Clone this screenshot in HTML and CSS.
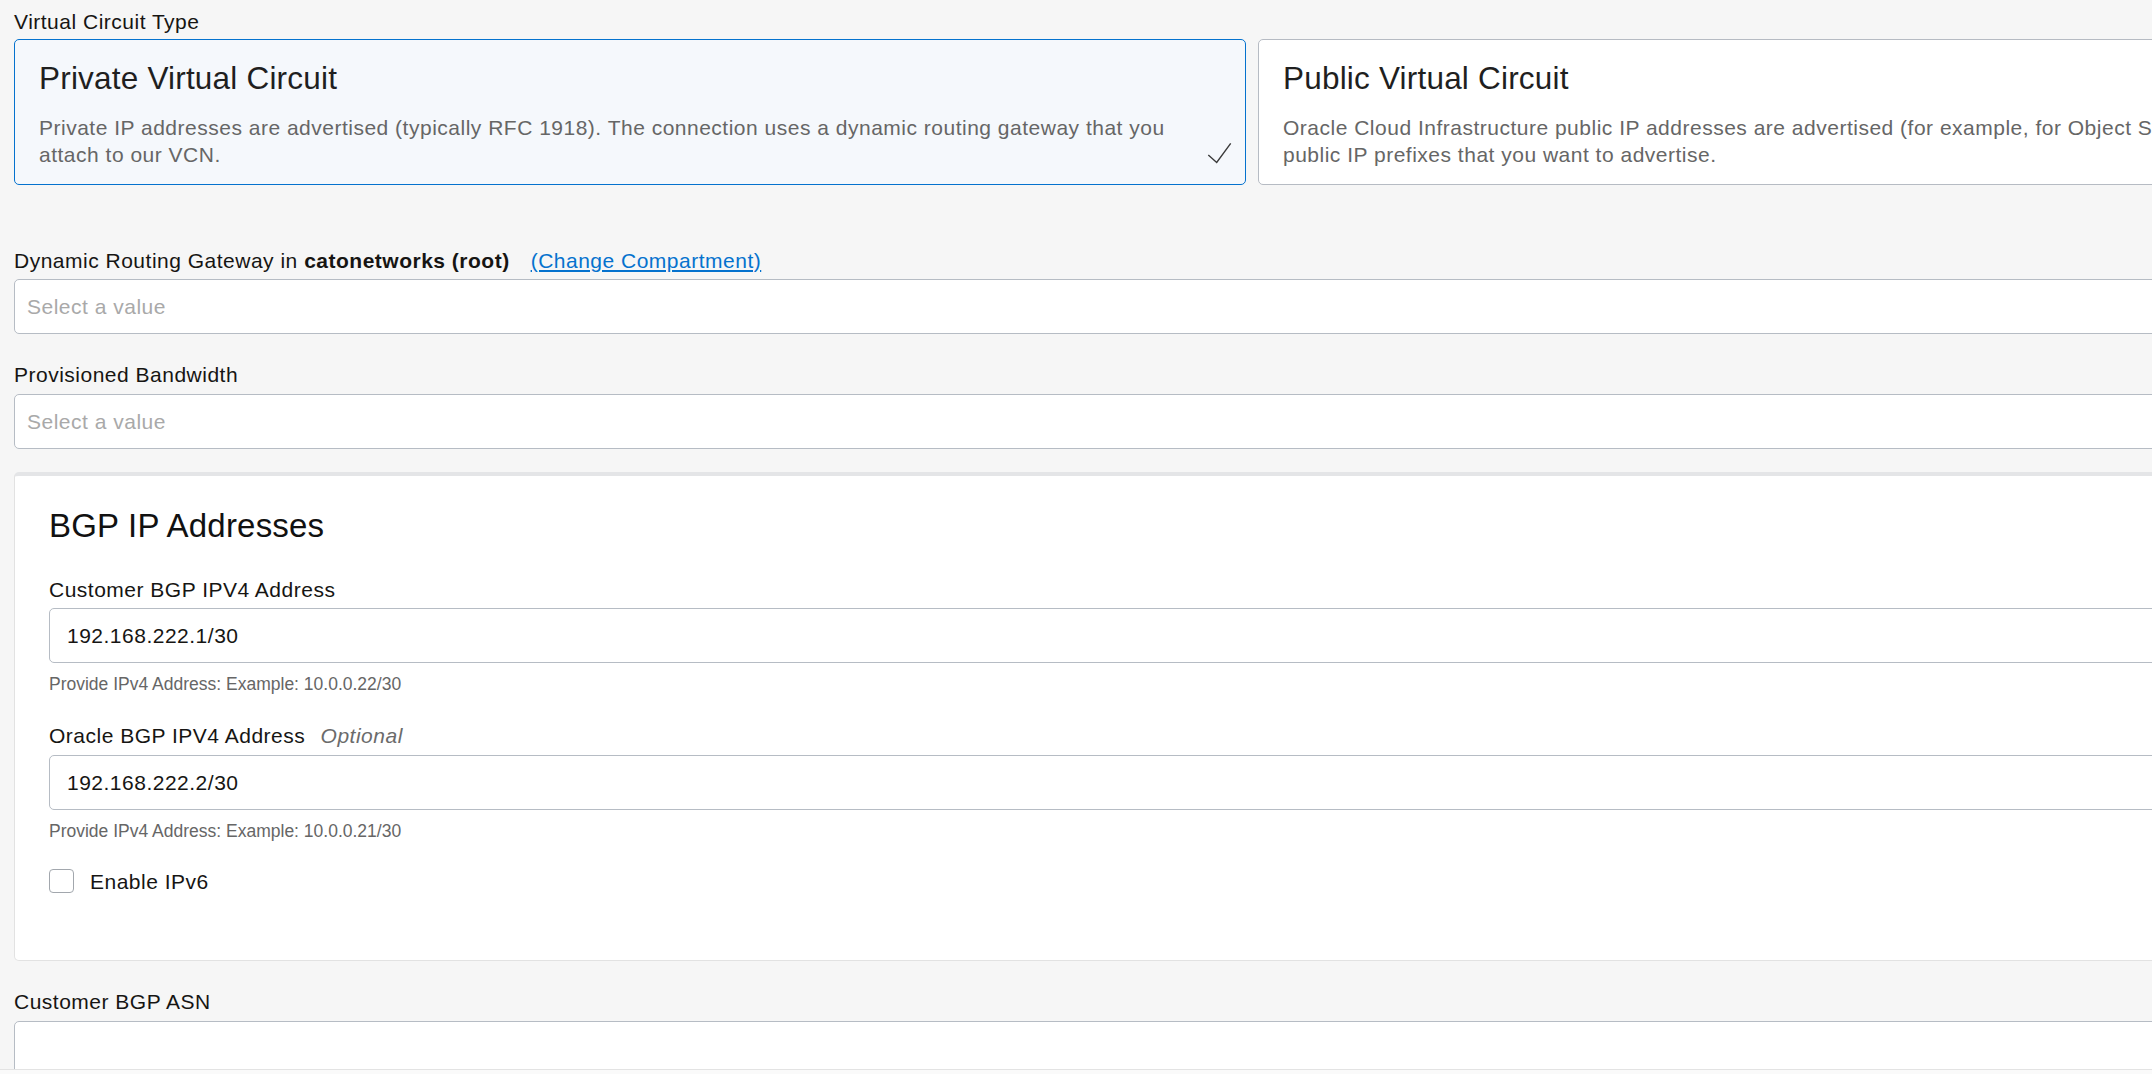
FILE: index.html
```html
<!DOCTYPE html>
<html lang="en">
<head>
    <meta charset="UTF-8">
    <title>Create Virtual Circuit</title>
    <link rel="stylesheet" href="styles.css">
</head>
<body>
<div class="page">
    <div class="field-label">Virtual Circuit Type</div>
    <div class="circuit-types">
        <div class="circuit-card selected">
            <div class="circuit-title">Private Virtual Circuit</div>
            <div class="circuit-desc">Private IP addresses are advertised (typically RFC 1918). The connection uses a dynamic routing gateway that you attach to our VCN.</div>
            <svg class="check" viewBox="0 0 25 22" width="25" height="22">
                <polyline points="1.3,13 9.7,20.5 23.7,1.3" fill="none" stroke="#3a3a3a" stroke-width="1.4"/>
            </svg>
        </div>
        <div class="circuit-card">
            <div class="circuit-title">Public Virtual Circuit</div>
            <div class="circuit-desc">Oracle Cloud Infrastructure public IP addresses are advertised (for example, for Object Storage). You specify the<br>public IP prefixes that you want to advertise.</div>
        </div>
    </div>

    <div class="field field-drg">
        <div class="field-label">Dynamic Routing Gateway in <b>catonetworks (root)</b><a href="#" class="change-link">(Change Compartment)</a></div>
        <div class="select-box placeholder">Select a value</div>
    </div>

    <div class="field">
        <div class="field-label">Provisioned Bandwidth</div>
        <div class="select-box placeholder">Select a value</div>
    </div>

    <div class="panel">
        <h2 class="panel-title">BGP IP Addresses</h2>

        <div class="field first">
            <div class="field-label">Customer BGP IPV4 Address</div>
            <div class="text-input">192.168.222.1/30</div>
            <div class="help">Provide IPv4 Address: Example: 10.0.0.22/30</div>
        </div>

        <div class="field">
            <div class="field-label">Oracle BGP IPV4 Address <span class="optional">Optional</span></div>
            <div class="text-input">192.168.222.2/30</div>
            <div class="help">Provide IPv4 Address: Example: 10.0.0.21/30</div>
        </div>

        <label class="checkbox-row">
            <span class="checkbox"></span>
            Enable IPv6
        </label>
    </div>

    <div class="field">
        <div class="field-label">Customer BGP ASN</div>
        <div class="text-input"></div>
    </div>
</div>
<div class="footer-bar"></div>
</body>
</html>
```

FILE: styles.css
```css
body {
    margin: 0;
    background-color: #f6f6f6;
    font-family: "Liberation Sans", Arial, Helvetica, sans-serif;
    color: #161513;
    overflow: hidden;
}

.page {
    width: 2476px;
    padding: 8px 14px 0;
}

.field-label {
    font-size: 21px;
    line-height: 27px;
    letter-spacing: 0.5px;
    margin-bottom: 5.5px;
}

.field-label b {
    font-weight: bold;
}

.change-link {
    margin-left: 21px;
    color: #0572ce;
    text-decoration: underline;
}

.optional {
    margin-left: 9px;
    font-style: italic;
    color: #6b6b6b;
}

/* circuit type cards */
.circuit-types {
    display: grid;
    grid-template-columns: 1232px 1232px;
    gap: 12px;
    margin-top: -1.5px;
}

.circuit-card {
    position: relative;
    background-color: #fff;
    border: 1px solid #b6bbc3;
    border-radius: 5px;
    padding: 20px 24px 16px 24px;
}

.circuit-card.selected {
    background-color: #f5f8fc;
    border-color: #0572ce;
}

.circuit-title {
    font-size: 31.5px;
    line-height: 36px;
    letter-spacing: 0.2px;
    color: #1f1f1f;
}

.circuit-desc {
    margin-top: 18px;
    font-size: 21px;
    line-height: 27px;
    letter-spacing: 0.5px;
    color: #666;
    padding-right: 20px;
}

.check {
    position: absolute;
    right: 13px;
    bottom: 20px;
}

/* fields */
.field {
    margin-top: 27px;
}

.field-drg {
    margin-top: 61.5px;
}

.select-box,
.text-input {
    box-sizing: border-box;
    height: 55px;
    background-color: #fff;
    border: 1px solid #b6bcc4;
    border-radius: 5px;
    font-size: 21px;
    line-height: 53px;
    letter-spacing: 0.5px;
}

.select-box {
    padding-left: 12px;
}

.select-box.placeholder {
    color: #a9a9a9;
}

.text-input {
    padding-left: 17px;
    color: #161513;
}

.help {
    margin-top: 9px;
    font-size: 17.5px;
    line-height: 24px;
    color: #666;
}

/* BGP panel */
.panel {
    margin-top: 23px;
    background-color: #fff;
    border: 1px solid #e2e2e2;
    border-top: 4px solid #e4e5e7;
    border-radius: 5px;
    padding: 32px 34px 65.5px;
}

.panel-title {
    margin: 0;
    font-size: 33px;
    line-height: 36px;
    letter-spacing: 0.2px;
    font-weight: normal;
    color: #111;
}

.panel .field {
    margin-top: 26px;
}

.panel .field.first {
    margin-top: 32px;
}

.checkbox-row {
    display: flex;
    align-items: center;
    margin-top: 25px;
    font-size: 21px;
    line-height: 27px;
    letter-spacing: 0.5px;
}

.checkbox {
    box-sizing: border-box;
    width: 25px;
    height: 24px;
    margin-right: 16px;
    background-color: #fff;
    border: 1px solid #a2a7ad;
    border-radius: 4px;
}

.footer-bar {
    position: fixed;
    left: 0;
    right: 0;
    bottom: 0;
    height: 4px;
    background-color: #fafafa;
    border-top: 1px solid #e3e3e3;
}
```
